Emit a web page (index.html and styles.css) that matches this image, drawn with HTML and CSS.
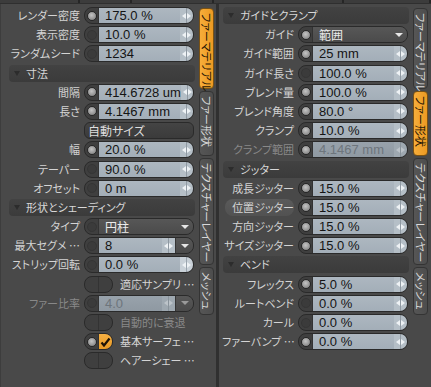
FILE: index.html
```html
<!DOCTYPE html>
<html lang="ja">
<head>
  <meta charset="UTF-8" />
  <title>ファー</title>
  <link rel="stylesheet" href="styles.css">
</head>
<body>
  <div class="top">
    <span class="seg w80"></span><span class="seg w52"></span><span class="seg w82"></span><span class="seg w130"></span><span class="seg grow"></span>
  </div>
  <div class="panels">
    <!-- left panel -->
    <div class="panel left">
      <div class="list">
        <div class="lbl">レンダー密度</div>
        <div class="ctl"><span class="dot on"></span><span class="field">175.0 %</span><span class="spin"></span></div>
        <div class="lbl">表示密度</div>
        <div class="ctl"><span class="dot"></span><span class="field">10.0 %</span><span class="spin"></span></div>
        <div class="lbl">ランダムシード</div>
        <div class="ctl"><span class="dot"></span><span class="field">1234</span><span class="spin"></span></div>
        <div class="head"><span class="tri"></span>寸法</div>
        <div class="lbl">間隔</div>
        <div class="ctl"><span class="dot on"></span><span class="field">414.6728 um</span><span class="spin"></span></div>
        <div class="lbl">長さ</div>
        <div class="ctl"><span class="dot on"></span><span class="field">4.1467 mm</span><span class="spin"></span></div>
        <div class="lbl"></div>
        <div class="btn">自動サイズ</div>
        <div class="lbl">幅</div>
        <div class="ctl"><span class="dot on"></span><span class="field">20.0 %</span><span class="spin"></span></div>
        <div class="lbl">テーパー</div>
        <div class="ctl"><span class="dot"></span><span class="field">90.0 %</span><span class="spin"></span></div>
        <div class="lbl">オフセット</div>
        <div class="ctl"><span class="dot"></span><span class="field">0 m</span><span class="spin"></span></div>
        <div class="head"><span class="tri"></span>形状とシェーディング</div>
        <div class="lbl">タイプ</div>
        <div class="ctl"><span class="dot"></span><span class="drop">円柱</span><span class="arrow"></span></div>
        <div class="lbl">最大セグメ …</div>
        <div class="ctl"><span class="dot"></span><span class="field">8</span><span class="spin"></span><span class="arrow"></span></div>
        <div class="lbl">ストリップ回転</div>
        <div class="ctl"><span class="dot"></span><span class="field">0.0 %</span><span class="spin hot"></span></div>
        <div class="lbl"></div>
        <div class="chkrow"><span class="ctl chk"><span class="box"></span><span class="box"></span></span><span class="chklbl">適応サンプリ …</span></div>
        <div class="lbl dim">ファー比率</div>
        <div class="ctl off"><span class="dot"></span><span class="field">4.0</span><span class="spin"></span><span class="arrow"></span></div>
        <div class="lbl"></div>
        <div class="chkrow"><span class="ctl chk"><span class="box"></span><span class="box"></span></span><span class="chklbl dim">自動的に衰退</span></div>
        <div class="lbl"></div>
        <div class="chkrow"><span class="ctl chk"><span class="dot on"></span><span class="box checked"><svg width="11" height="10" viewBox="0 0 11 10"><path d="M1.5 5.5 L4 8.5 L9.5 1.5" fill="none" stroke="#1d1206" stroke-width="2.2"/></svg></span></span><span class="chklbl">基本サーフェ …</span></div>
        <div class="lbl"></div>
        <div class="chkrow"><span class="ctl chk"><span class="box"></span><span class="box"></span></span><span class="chklbl">ヘアーシェー …</span></div>
      </div>
      <div class="tabs">
        <div class="tab active t1">ファーマテリアル</div>
        <div class="tab t2">ファー形状</div>
        <div class="tab t3">テクスチャーレイヤー</div>
        <div class="tab t4">メッシュ</div>
      </div>
    </div>

    <div class="divider"></div>

    <!-- right panel -->
    <div class="panel right">
      <div class="list">
        <div class="head"><span class="tri"></span>ガイドとクランプ</div>
        <div class="lbl">ガイド</div>
        <div class="ctl"><span class="dot on"></span><span class="drop">範囲</span><span class="arrow"></span></div>
        <div class="lbl">ガイド範囲</div>
        <div class="ctl"><span class="dot on"></span><span class="field">25 mm</span><span class="spin"></span></div>
        <div class="lbl">ガイド長さ</div>
        <div class="ctl"><span class="dot"></span><span class="field">100.0 %</span><span class="spin"></span></div>
        <div class="lbl">ブレンド量</div>
        <div class="ctl"><span class="dot on"></span><span class="field">100.0 %</span><span class="spin"></span></div>
        <div class="lbl">ブレンド角度</div>
        <div class="ctl"><span class="dot on"></span><span class="field">80.0 °</span><span class="spin"></span></div>
        <div class="lbl">クランプ</div>
        <div class="ctl"><span class="dot on"></span><span class="field">10.0 %</span><span class="spin"></span></div>
        <div class="lbl dim">クランプ範囲</div>
        <div class="ctl off"><span class="dot on"></span><span class="field">4.1467 mm</span><span class="spin"></span></div>
        <div class="head"><span class="tri"></span>ジッター</div>
        <div class="lbl">成長ジッター</div>
        <div class="ctl"><span class="dot on"></span><span class="field">15.0 %</span><span class="spin"></span></div>
        <div class="lbl hover">位置ジッター</div>
        <div class="ctl"><span class="dot on"></span><span class="field">15.0 %</span><span class="spin"></span></div>
        <div class="lbl">方向ジッター</div>
        <div class="ctl"><span class="dot on"></span><span class="field">15.0 %</span><span class="spin"></span></div>
        <div class="lbl">サイズジッター</div>
        <div class="ctl"><span class="dot on"></span><span class="field">15.0 %</span><span class="spin"></span></div>
        <div class="head"><span class="tri"></span>ベンド</div>
        <div class="lbl">フレックス</div>
        <div class="ctl"><span class="dot on"></span><span class="field">5.0 %</span><span class="spin"></span></div>
        <div class="lbl">ルートベンド</div>
        <div class="ctl"><span class="dot"></span><span class="field">0.0 %</span><span class="spin"></span></div>
        <div class="lbl">カール</div>
        <div class="ctl"><span class="dot"></span><span class="field">0.0 %</span><span class="spin"></span></div>
        <div class="lbl">ファーバンプ …</div>
        <div class="ctl"><span class="dot on"></span><span class="field">0.0 %</span><span class="spin"></span></div>
      </div>
      <div class="tabs">
        <div class="tab t1">ファーマテリアル</div>
        <div class="tab active t2">ファー形状</div>
        <div class="tab t3">テクスチャーレイヤー</div>
        <div class="tab t4">メッシュ</div>
      </div>
    </div>
  </div>
</body>
</html>
```

FILE: styles.css
```css
body {
  margin: 0;
  width: 431px;
  height: 387px;
  overflow: hidden;
  background: #494949;
  color: #d4d4d4;
  font-family: 'Noto Sans CJK JP', sans-serif;
  font-size: 11px;
  font-feature-settings: "palt";
}
.top {
  display: flex;
  height: 4px;
  background: #2f2f2f;
}
.seg {
  height: 3px;
  background: #3c3c3c;
  border-right: 2px solid #262626;
}
.w80 { width: 78px; }
.w52 { width: 50px; }
.w82 { width: 80px; }
.w130 { width: 128px; }
.grow { flex: 1; }
.panels {
  display: flex;
  height: 383px;
}
.panel {
  display: flex;
  align-items: flex-start;
}
.left {
  width: 216px;
  padding-left: 4px;
  box-sizing: border-box;
  border-left: 1px solid #3d3d3d;
}
.right {
  flex: 1;
  padding-left: 3px;
}
.divider {
  width: 3px;
  background: #303030;
}
.list {
  display: grid;
  grid-template-columns: 75px 110px;
  grid-auto-rows: 17px;
  column-gap: 4px;
  row-gap: 2.2px;
  padding-top: 3px;
}
.right .list {
  grid-template-columns: 72px 110px;
}
.lbl {
  text-align: right;
  line-height: 17px;
  white-space: nowrap;
}
.lbl.dim, .chklbl.dim {
  color: #888;
}
.lbl.hover {
  background: linear-gradient(#5a5a5a, #525252);
  border-radius: 8px;
  margin-left: 3px;
}
.head {
  grid-column: 1 / 3;
  margin-left: 4px;
  margin-right: -1px;
  display: flex;
  align-items: center;
  background: linear-gradient(#424242, #3b3b3b);
  border-radius: 4px;
  color: #d8d8d8;
  line-height: 17px;
}
.right .head {
  margin-left: 1px;
}
.tri {
  width: 0;
  height: 0;
  margin: 0 6px 0 5px;
  border-left: 3px solid transparent;
  border-right: 3px solid transparent;
  border-top: 5px solid #2c2c2c;
}
.ctl {
  display: flex;
  height: 17px;
  box-sizing: border-box;
  border: 1px solid #2a2a2a;
  border-radius: 8px;
  overflow: hidden;
  background: #3f3f3f;
}
.dot {
  width: 13px;
  flex: none;
  display: flex;
  align-items: center;
  justify-content: center;
  border-right: 1px solid #333;
}
.dot::before {
  content: "";
  width: 8px;
  height: 8px;
  border-radius: 50%;
  background: #3b3b3b;
  border: 1px solid #363636;
}
.dot.on::before {
  background: radial-gradient(circle at 45% 40%, #c4c4c4, #8d8d8d 70%);
  border-color: #262626;
}
.field {
  flex: 1;
  background: linear-gradient(#adb7c0, #a3aeb8);
  color: #141414;
  font-family: 'Liberation Sans', Arial, sans-serif;
  font-size: 13px;
  line-height: 15px;
  padding-left: 6px;
  white-space: nowrap;
}
.spin {
  width: 13px;
  flex: none;
  display: flex;
  align-items: center;
  justify-content: center;
  gap: 1px;
  background: linear-gradient(to right, #b5bfc7 0 6px, #8f99a2 6px 7px, #b5bfc7 7px);
}
.spin::before {
  content: "";
  border-top: 3px solid transparent;
  border-bottom: 3px solid transparent;
  border-right: 4px solid #eef2f5;
}
.spin::after {
  content: "";
  border-top: 3px solid transparent;
  border-bottom: 3px solid transparent;
  border-left: 4px solid #eef2f5;
}
.spin.hot {
  background: linear-gradient(to right, #c9d1d8 0 6px, #9aa4ad 6px 7px, #c9d1d8 7px);
}
.drop {
  flex: 1;
  background: linear-gradient(#575757, #4b4b4b);
  color: #ececec;
  padding-left: 6px;
  line-height: 15px;
  font-size: 12px;
}
.arrow {
  width: 17px;
  flex: none;
  display: flex;
  align-items: center;
  justify-content: center;
  background: linear-gradient(#575757, #4b4b4b);
}
.arrow::before {
  content: "";
  border-left: 4px solid transparent;
  border-right: 4px solid transparent;
  border-top: 4px solid #e6e6e6;
}
.ctl .spin + .arrow {
  border-left: 1px solid #353535;
}
.ctl.off .field {
  background: linear-gradient(#98a2ab, #8f99a2);
  color: #6d757c;
}
.ctl.off .spin {
  background: linear-gradient(to right, #9ea8b0 0 6px, #88929a 6px 7px, #9ea8b0 7px);
}
.ctl.off .spin::before { border-right-color: #bcc3c9; }
.ctl.off .spin::after { border-left-color: #bcc3c9; }
.ctl.off .arrow::before { border-top-color: #9a9a9a; }
.btn {
  height: 17px;
  box-sizing: border-box;
  border: 1px solid #2a2a2a;
  border-radius: 6px;
  background: linear-gradient(#444, #3b3b3b);
  color: #dedede;
  line-height: 15px;
  padding-left: 3px;
  font-size: 12px;
}
.chkrow {
  display: flex;
  align-items: center;
  gap: 7px;
}
.ctl.chk {
  width: 29px;
  flex: none;
}
.box {
  width: 13px;
  flex: none;
  display: flex;
  align-items: center;
  justify-content: center;
  border-right: 1px solid #333;
}
.box:last-child {
  border-right: none;
  flex: 1;
}
.box.checked {
  background: linear-gradient(#f6b043, #e89a25);
}
.chklbl {
  line-height: 17px;
  white-space: nowrap;
}
.tabs {
  display: flex;
  flex-direction: column;
  gap: 2px;
  margin-left: 5px;
  padding-top: 4px;
}
.tab {
  writing-mode: vertical-rl;
  text-orientation: sideways;
  width: 15px;
  box-sizing: border-box;
  border: 1px solid #343434;
  border-radius: 4px;
  background: linear-gradient(to right, #565656, #4d4d4d);
  color: #d8d8d8;
  font-size: 11px;
  line-height: 13px;
  padding-top: 4px;
  white-space: nowrap;
}
.tab.active {
  background: linear-gradient(to right, #f7ad3a, #ec9a22);
  border-color: #7a5214;
  color: #1e1405;
}
.t1 { height: 81px; }
.t2 { height: 65px; }
.t3 { height: 107px; }
.t4 { height: 48px; }
```
